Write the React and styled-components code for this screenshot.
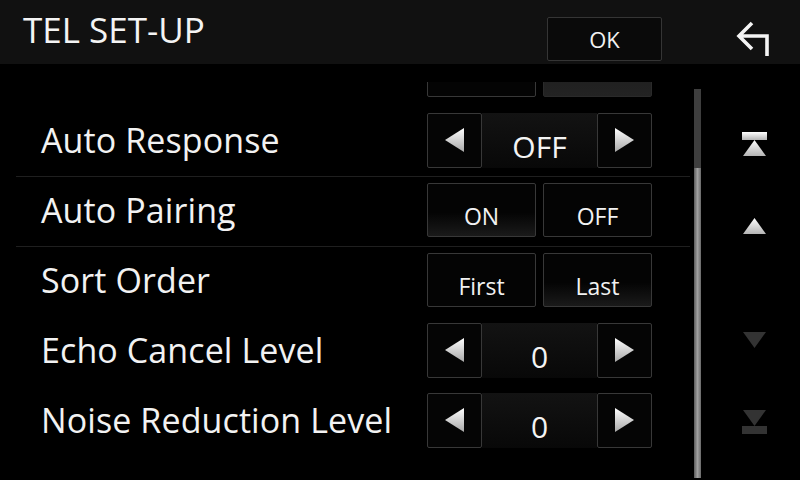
import React from "react";
import styled, { createGlobalStyle } from "styled-components";

const Global = createGlobalStyle`
  html, body { margin: 0; padding: 0; background: #000; }
  body { font-family: "Open Sans", "Noto Sans", "DejaVu Sans", sans-serif; color: #f2f2f2; }
  * { box-sizing: border-box; }
`;

const Screen = styled.div`
  width: 800px;
  height: 480px;
  background: #000;
  display: flex;
  flex-direction: column;
  overflow: hidden;
`;

const Header = styled.div`
  height: 64px;
  flex: none;
  background: #111;
  display: flex;
  align-items: flex-start;
`;

const Title = styled.div`
  flex: 1;
  margin: 12px 0 0 23px;
  font-size: 35px;
  line-height: 35px;
  color: #f4f4f4;
  white-space: nowrap;
`;

const OkButton = styled.div`
  width: 115px;
  height: 44px;
  margin: 17px 46px 0 0;
  border: 1px solid #353535;
  border-radius: 2px;
  background: #0a0a0a;
  display: flex;
  align-items: center;
  justify-content: center;
  font-size: 22px;
  color: #f2f2f2;
`;

const BackSlot = styled.div`
  width: 92px;
  height: 64px;
  display: flex;
  justify-content: center;
  padding-top: 19px;
`;

const Body = styled.div`
  flex: 1;
  display: flex;
  min-height: 0;
`;

const Viewport = styled.div`
  width: 674px;
  margin: 18px 4px 0 16px;
  overflow: hidden;
`;

const List = styled.div`
  margin-top: -45px;
`;

const Row = styled.div`
  height: 70px;
  display: flex;
  align-items: center;
  padding: 6px 38px 9px 25px;
  border-bottom: 1px solid ${(p) => (p.$divider ? "#1f1f1f" : "transparent")};
`;

const Label = styled.div`
  flex: 1;
  font-size: 34px;
  letter-spacing: 0.1px;
  white-space: nowrap;
  color: #f2f2f2;
`;

const Stepper = styled.div`
  width: 225px;
  height: 55px;
  display: flex;
`;

const ArrowBtn = styled.div`
  width: 55px;
  height: 55px;
  flex: none;
  border: 1px solid #383838;
  border-radius: 2px;
  background: #050505;
  display: flex;
  align-items: center;
  justify-content: center;
`;

const ValueBox = styled.div`
  flex: 1;
  display: flex;
  align-items: center;
  justify-content: center;
  padding-top: 12px;
  font-size: 30px;
  background: linear-gradient(to bottom, #131313, #080808);
  color: #f4f4f4;
`;

const Choices = styled.div`
  width: 225px;
  height: 54px;
  display: flex;
  gap: 7px;
`;

const ChoiceBtn = styled.div`
  flex: 1;
  border: 1px solid ${(p) => (p.$filled ? "#2a2a2a" : "#383838")};
  border-radius: 2px;
  display: flex;
  align-items: center;
  justify-content: center;
  padding-top: 12px;
  font-size: 23px;
  color: #f2f2f2;
  background: ${(p) =>
    p.$filled
      ? "linear-gradient(to bottom, #1a1a1a, #232323)"
      : p.$active
      ? "linear-gradient(to bottom, #040404 55%, #1a1a1a)"
      : "#040404"};
`;

const ScrollBar = styled.div`
  width: 7px;
  margin: 25px 7px 2px 0;
  display: flex;
  flex-direction: column;
`;

const ScrollThumb = styled.div`
  height: 79px;
  background: #3e3e3e;
`;

const ScrollTrack = styled.div`
  flex: 1;
  background: linear-gradient(to right, #5a5a5a, #a0a0a0 50%, #6a6a6a);
`;

const NavColumn = styled.div`
  width: 92px;
  display: flex;
  flex-direction: column;
  justify-content: space-between;
  padding: 39px 0 17px;
`;

const NavGroup = styled.div`
  display: flex;
  flex-direction: column;
`;

const NavButton = styled.div`
  height: 82px;
  display: flex;
  align-items: center;
  justify-content: center;
`;

const Tri = ({ dir }) => (
  <svg width="19" height="24" viewBox="0 0 19 24">
    <defs>
      <linearGradient id={`tg-${dir}`} x1="0" y1="0" x2="0" y2="1">
        <stop offset="0" stopColor="#ffffff" />
        <stop offset="1" stopColor="#a8a8a8" />
      </linearGradient>
    </defs>
    <polygon
      points={dir === "left" ? "19,0 0,12 19,24" : "0,0 19,12 0,24"}
      fill={`url(#tg-${dir})`}
    />
  </svg>
);

const NavIcon = ({ kind, dim }) => {
  const c1 = dim ? "#333" : "#ffffff";
  const c2 = dim ? "#262626" : "#b4b4b4";
  const id = `ng-${kind}`;
  const grad = (
    <defs>
      <linearGradient id={id} x1="0" y1="0" x2="0" y2="1">
        <stop offset="0" stopColor={c1} />
        <stop offset="1" stopColor={c2} />
      </linearGradient>
    </defs>
  );
  if (kind === "top")
    return (
      <svg width="25" height="24" viewBox="0 0 25 24">
        {grad}
        <rect x="0" y="0" width="25" height="8" fill={`url(#${id})`} />
        <polygon points="12.5,8 1,24 24,24" fill={`url(#${id})`} />
      </svg>
    );
  if (kind === "up")
    return (
      <svg width="25" height="16" viewBox="0 0 25 16">
        {grad}
        <polygon points="12.5,0 1,16 24,16" fill={`url(#${id})`} />
      </svg>
    );
  if (kind === "down")
    return (
      <svg width="25" height="16" viewBox="0 0 25 16">
        <polygon points="1,0 24,0 12.5,16" fill={c1} />
      </svg>
    );
  return (
    <svg width="25" height="24" viewBox="0 0 25 24">
      <polygon points="1,0 24,0 12.5,16" fill={c1} />
      <rect x="0" y="16" width="25" height="8" fill={c1} />
    </svg>
  );
};

const BackIcon = () => (
  <svg width="40" height="40" viewBox="0 0 40 40">
    <path
      d="M18 4 L5 17 L18 30 M6 17 H33 V37"
      fill="none"
      stroke="#f4f4f4"
      strokeWidth="3.6"
      strokeLinejoin="miter"
    />
  </svg>
);

const StepperControl = ({ value }) => (
  <Stepper>
    <ArrowBtn>
      <Tri dir="left" />
    </ArrowBtn>
    <ValueBox>{value}</ValueBox>
    <ArrowBtn>
      <Tri dir="right" />
    </ArrowBtn>
  </Stepper>
);

const ChoiceControl = ({ options, active, filled }) => (
  <Choices>
    {options.map((o, i) => (
      <ChoiceBtn key={i} $active={i === active} $filled={i === filled}>
        {o}
      </ChoiceBtn>
    ))}
  </Choices>
);

export default function App() {
  return (
    <>
      <Global />
      <Screen>
        <Header>
          <Title>TEL SET-UP</Title>
          <OkButton>OK</OkButton>
          <BackSlot>
            <BackIcon />
          </BackSlot>
        </Header>
        <Body>
          <Viewport>
            <List>
              <Row>
                <Label></Label>
                <ChoiceControl options={["", ""]} filled={1} />
              </Row>
              <Row $divider>
                <Label>Auto Response</Label>
                <StepperControl value="OFF" />
              </Row>
              <Row $divider>
                <Label>Auto Pairing</Label>
                <ChoiceControl options={["ON", "OFF"]} active={0} />
              </Row>
              <Row>
                <Label>Sort Order</Label>
                <ChoiceControl options={["First", "Last"]} active={1} />
              </Row>
              <Row>
                <Label>Echo Cancel Level</Label>
                <StepperControl value="0" />
              </Row>
              <Row>
                <Label>Noise Reduction Level</Label>
                <StepperControl value="0" />
              </Row>
            </List>
          </Viewport>
          <ScrollBar>
            <ScrollThumb />
            <ScrollTrack />
          </ScrollBar>
          <NavColumn>
            <NavGroup>
              <NavButton>
                <NavIcon kind="top" />
              </NavButton>
              <NavButton>
                <NavIcon kind="up" />
              </NavButton>
            </NavGroup>
            <NavGroup>
              <NavButton>
                <NavIcon kind="down" dim />
              </NavButton>
              <NavButton>
                <NavIcon kind="bottom" dim />
              </NavButton>
            </NavGroup>
          </NavColumn>
        </Body>
      </Screen>
    </>
  );
}
